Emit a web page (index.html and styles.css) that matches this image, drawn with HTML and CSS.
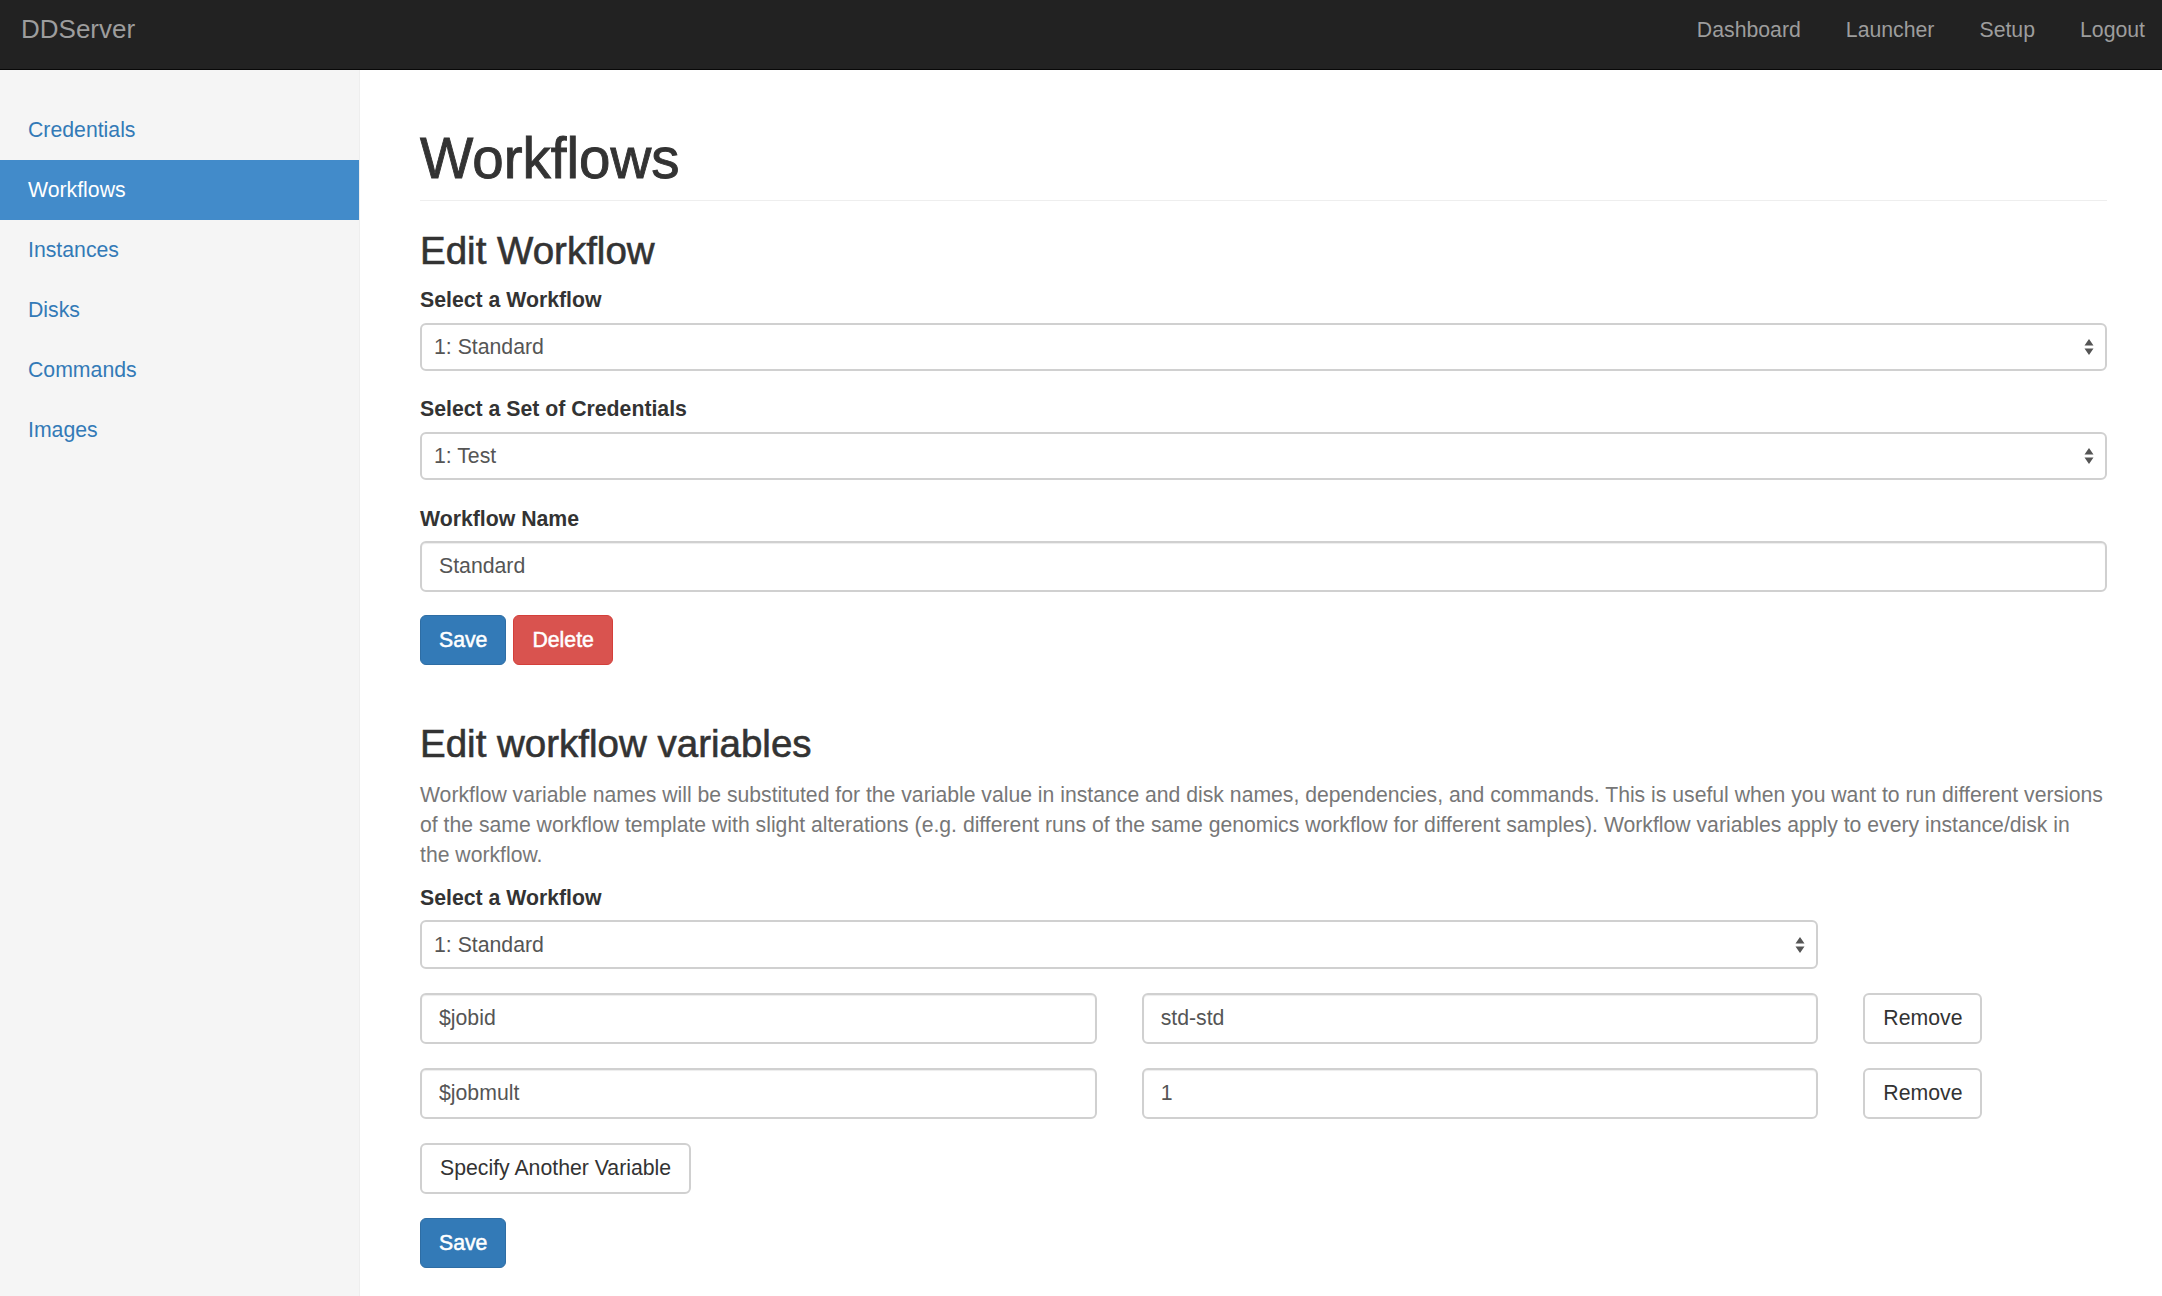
FILE: index.html
```html
<!DOCTYPE html>
<html lang="en">
<head>
<meta charset="utf-8">
<title>DDServer - Workflows</title>
<link rel="stylesheet" href="styles.css">
</head>
<body>
<nav class="navbar">
  <a class="brand" href="#">DDServer</a>
  <ul class="top-nav">
    <li><a href="#">Dashboard</a></li>
    <li><a href="#">Launcher</a></li>
    <li><a href="#">Setup</a></li>
    <li><a href="#">Logout</a></li>
  </ul>
</nav>
<div class="layout">
  <aside class="sidebar">
    <ul class="side-nav">
      <li><a href="#">Credentials</a></li>
      <li class="active"><a href="#">Workflows</a></li>
      <li><a href="#">Instances</a></li>
      <li><a href="#">Disks</a></li>
      <li><a href="#">Commands</a></li>
      <li><a href="#">Images</a></li>
    </ul>
  </aside>
  <main class="main">
    <h1 class="page-header">Workflows</h1>

    <h3 class="section-title">Edit Workflow</h3>
    <div class="form-group">
      <label class="field-label">Select a Workflow</label>
      <div class="select"><span>1: Standard</span><svg class="caret" width="10" height="20" viewBox="0 0 10 20"><path d="M5 2 L9.5 8.5 L0.5 8.5 Z M5 18 L9.5 11.5 L0.5 11.5 Z" fill="#555"/></svg></div>
    </div>
    <div class="form-group">
      <label class="field-label">Select a Set of Credentials</label>
      <div class="select"><span>1: Test</span><svg class="caret" width="10" height="20" viewBox="0 0 10 20"><path d="M5 2 L9.5 8.5 L0.5 8.5 Z M5 18 L9.5 11.5 L0.5 11.5 Z" fill="#555"/></svg></div>
    </div>
    <div class="form-group">
      <label class="field-label">Workflow Name</label>
      <input class="text-input" type="text" value="Standard">
    </div>
    <div class="btn-row">
      <button class="btn btn-primary">Save</button>
      <button class="btn btn-danger">Delete</button>
    </div>

    <h3 class="section-title vars-title">Edit workflow variables</h3>
    <p class="help">Workflow variable names will be substituted for the variable value in instance and disk names, dependencies, and commands. This is useful when you want to run different versions<br>of the same workflow template with slight alterations (e.g. different runs of the same genomics workflow for different samples). Workflow variables apply to every instance/disk in<br>the workflow.</p>
    <label class="field-label">Select a Workflow</label>
    <div class="grid">
      <div class="select span-10"><span>1: Standard</span><svg class="caret" width="10" height="20" viewBox="0 0 10 20"><path d="M5 2 L9.5 8.5 L0.5 8.5 Z M5 18 L9.5 11.5 L0.5 11.5 Z" fill="#555"/></svg></div>
    </div>
    <div class="grid var-row">
      <input class="text-input span-5" type="text" value="$jobid">
      <input class="text-input span-5" type="text" value="std-std">
      <div class="span-2"><button class="btn btn-default">Remove</button></div>
    </div>
    <div class="grid var-row">
      <input class="text-input span-5" type="text" value="$jobmult">
      <input class="text-input span-5" type="text" value="1">
      <div class="span-2"><button class="btn btn-default">Remove</button></div>
    </div>
    <div class="var-row">
      <button class="btn btn-default">Specify Another Variable</button>
    </div>
    <div class="var-row">
      <button class="btn btn-primary">Save</button>
    </div>
  </main>
</div>
</body>
</html>
```
FILE: styles.css
```css
html, body {
  margin: 0;
  padding: 0;
  height: 100%;
  overflow: hidden;
}
body {
  font-family: "Liberation Sans", Arial, Helvetica, sans-serif;
  font-size: 21.25px;
  line-height: 30px;
  color: #333;
  background: #fff;
}
a { text-decoration: none; }
ul { list-style: none; margin: 0; padding: 0; }

/* Top navbar */
.navbar {
  height: 69px;
  background: #222;
  border-bottom: 1px solid #080808;
  display: flex;
  align-items: flex-start;
  justify-content: space-between;
}
.brand {
  color: #9d9d9d;
  font-size: 26px;
  line-height: 30px;
  padding: 14px 0 0 21px;
}
.top-nav {
  display: flex;
  padding-top: 15px;
}
.top-nav a {
  display: block;
  color: #9d9d9d;
  font-size: 21.25px;
  padding: 0 22.5px;
  line-height: 30px;
}
.top-nav li:last-child a { padding-right: 17px; }

/* Layout */
.layout {
  display: flex;
  height: calc(100% - 70px);
}
.sidebar {
  width: 359px;
  flex: none;
  background: #f5f5f5;
  border-right: 1px solid #eee;
  padding-top: 30px;
  box-sizing: content-box;
}
.side-nav a {
  display: block;
  height: 60px;
  line-height: 60px;
  padding-left: 28px;
  color: #337ab7;
  font-size: 21.25px;
}
.side-nav .active a {
  background: #428bca;
  color: #fff;
}

.main {
  flex: 1;
  min-width: 0;
  padding: 0 55px 0 60px;
}

/* Headings */
.page-header {
  font-size: 56.5px;
  font-weight: 500;
  line-height: 62px;
  margin: 58px 0 0;
  padding-bottom: 10px;
  border-bottom: 1px solid #eee;
  color: #333;
  -webkit-text-stroke: 0.9px #333;
}
.section-title {
  font-size: 38.5px;
  font-weight: 500;
  line-height: 42px;
  margin: 29px 0 13px;
  color: #333;
  -webkit-text-stroke: 0.6px #333;
}
.vars-title {
  margin-top: 58px;
  margin-bottom: 14.5px;
}

/* Forms */
.form-group {
  margin-bottom: 23.3px;
}
.field-label {
  display: block;
  font-weight: bold;
  margin-bottom: 7.5px;
}
.select {
  height: 48.5px;
  box-sizing: border-box;
  border: 2px solid #d0d0d0;
  border-radius: 6px;
  background: #fff;
  display: flex;
  align-items: center;
  justify-content: space-between;
  padding: 0 11px 0 12px;
  color: #555;
}
.caret { flex: none; }
.text-input {
  display: block;
  width: 100%;
  height: 51px;
  box-sizing: border-box;
  border: 2px solid #d0d0d0;
  border-radius: 6px;
  padding: 0 17px;
  font-family: "Liberation Sans", Arial, Helvetica, sans-serif;
  font-size: 21.25px;
  color: #555;
  background: #fff;
  box-shadow: inset 0 1px 1px rgba(0,0,0,.075);
  outline: none;
}

/* Buttons */
.btn-row {
  display: flex;
  gap: 7px;
}
.btn {
  height: 50px;
  box-sizing: border-box;
  padding: 0 18px;
  border: 1.5px solid transparent;
  border-radius: 6px;
  font-family: "Liberation Sans", Arial, Helvetica, sans-serif;
  font-size: 21.25px;
  line-height: 30px;
  cursor: pointer;
}
.btn-primary {
  background: #337ab7;
  border-color: #2e6da4;
  color: #fff;
  -webkit-text-stroke: 0.5px #fff;
}
.btn-danger {
  background: #d9534f;
  border-color: #d43f3a;
  color: #fff;
  -webkit-text-stroke: 0.5px #fff;
}
.btn-default {
  background: #fff;
  border: 2px solid #d0d0d0;
  color: #333;
}

.help {
  color: #777;
  font-size: 21.2px;
  margin: 0 0 13px;
  white-space: nowrap;
}

/* Grid rows */
.grid {
  display: grid;
  grid-template-columns: repeat(12, 1fr);
  column-gap: 45px;
}
.span-10 { grid-column: span 10; }
.span-5 { grid-column: span 5; }
.span-2 { grid-column: span 2; }
.var-row {
  margin-top: 24px;
}
.var-row .btn-default { height: 51px; }
```
